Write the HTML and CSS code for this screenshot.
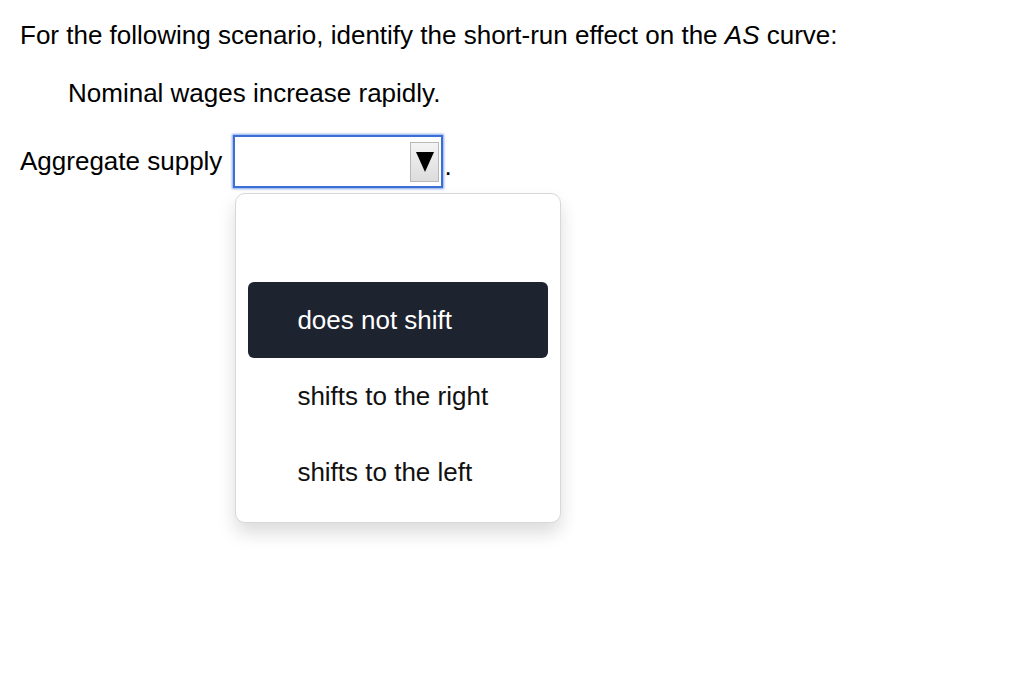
FILE: index.html
```html
<!DOCTYPE html>
<html lang="en">
<head>
    <meta charset="UTF-8">
    <title>AS curve question</title>
    <link rel="stylesheet" href="styles.css">
</head>
<body>
    <div class="question">
        <p class="prompt">For the following scenario, identify the short-run effect on the <i>AS</i> curve:</p>
        <p class="scenario">Nominal wages increase rapidly.</p>
        <div class="answer">
            <span class="label">Aggregate supply</span>
            <div class="picker">
                <div class="select">
                    <span class="arrow"></span>
                </div>
                <ul class="menu">
                    <li class="option empty"></li>
                    <li class="option active">does not shift</li>
                    <li class="option">shifts to the right</li>
                    <li class="option">shifts to the left</li>
                </ul>
            </div>
            <span class="dot">.</span>
        </div>
    </div>
</body>
</html>
```

FILE: styles.css
```css
html, body {
    height: 100%;
}
body {
    margin: 0;
    min-height: 680px;
    background: #fff;
    font-family: 'Liberation Sans', Arial, sans-serif;
    font-size: 26px;
    color: #000;
}
.question {
    padding: 20px;
}
.prompt {
    margin: 0;
    line-height: 30px;
}
.scenario {
    margin: 28px 0 0 48px;
    line-height: 30px;
}
.answer {
    display: flex;
    align-items: center;
    margin-top: 27px;
}
.label {
    margin-right: 11px;
}
.picker {
    position: relative;
}
.select {
    width: 204px;
    height: 49px;
    border: 2px solid #3b6fd6;
    box-shadow: 0 0 2px 1px rgba(80, 130, 230, 0.7);
    background: #fff;
    display: flex;
    align-items: center;
    justify-content: flex-end;
    padding-right: 2px;
}
.arrow {
    width: 29px;
    height: 40px;
    box-sizing: border-box;
    border: 1px solid #b8b8b8;
    background: linear-gradient(#f4f4f4, #dcdcdc);
    display: flex;
    align-items: center;
    justify-content: center;
}
.arrow::after {
    content: '';
    border-left: 9px solid transparent;
    border-right: 9px solid transparent;
    border-top: 20px solid #000;
}
.dot {
    margin-left: 1px;
    align-self: flex-end;
    margin-bottom: 10px;
    line-height: 24px;
}
.menu {
    position: absolute;
    top: 58px;
    left: 2px;
    width: 326px;
    margin: 0;
    padding: 12px;
    box-sizing: border-box;
    list-style: none;
    background: #fff;
    border: 1px solid #d8d8d8;
    border-radius: 10px;
    box-shadow: 0 10px 18px rgba(0, 0, 0, 0.14);
    z-index: 10;
}
.option {
    height: 76px;
    display: flex;
    align-items: center;
    padding-left: 49px;
    border-radius: 6px;
    color: #111;
}
.option.active {
    background: #1e2330;
    color: #fff;
}
```
